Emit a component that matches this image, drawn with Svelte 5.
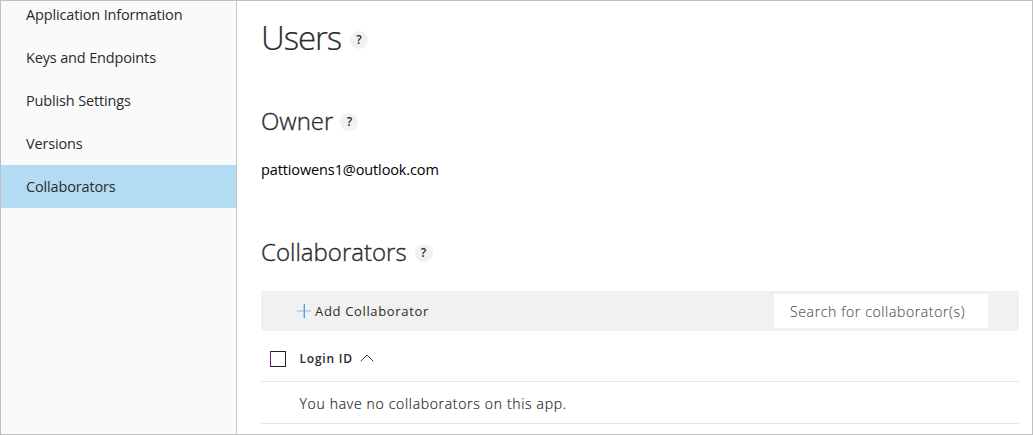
<script>
  const links = ['Application Information', 'Keys and Endpoints', 'Publish Settings', 'Versions', 'Collaborators'];
  let active = $state('Collaborators');
</script>

<div class="page">
  <nav>
    {#each links as link}
      <button class="link" class:active={link === active} onclick={() => (active = link)}><span>{link}</span></button>
    {/each}
  </nav>
  <main>
    <header class="title"><h1><span>Users</span></h1><i class="help">?</i></header>
    <header class="owner"><h2><span>Owner</span></h2><i class="help">?</i></header>
    <p class="email"><span>pattiowens1@outlook.com</span></p>
    <header class="collab"><h2><span>Collaborators</span></h2><i class="help">?</i></header>
    <div class="toolbar">
      <button class="add">
        <svg width="14" height="14" viewBox="0 0 14 14" fill="none">
          <path d="M0 7H14" stroke="#b0c6e8" stroke-width="1.4" />
          <path d="M7.3 0V14" stroke="#4a9fe0" stroke-width="1.3" />
        </svg>
        <span>Add Collaborator</span>
      </button>
      <div class="search"><span>Search for collaborator(s)</span></div>
    </div>
    <div class="row head">
      <i class="box"></i>
      <b>Login ID</b>
      <svg width="14" height="8" viewBox="0 0 14 8" fill="none"><path d="M.6 7.4L7 1L13.4 7.4" stroke="#444" /></svg>
    </div>
    <div class="row empty"><span>You have no collaborators on this app.</span></div>
  </main>
</div>

<style>
  :global(body) { background: #fff; }
  .page {
    box-sizing: border-box;
    width: 1033px;
    height: 435px;
    display: flex;
    overflow: hidden;
    border: 1px solid #c0c0c0;
    color: #2b2b2b;
    font-family: "Open Sans", "Noto Sans", sans-serif;
  }
  button { border: 0; background: none; padding: 0; font: inherit; color: inherit; text-align: left; }
  nav {
    box-sizing: border-box;
    width: 236px;
    flex: none;
    background: #fafafa;
    border-right: 1px solid #c8c8c8;
  }
  .link {
    display: block;
    width: 100%;
    height: 43px;
    padding-left: 25px;
    font-size: 14.5px;
    line-height: 43px;
    letter-spacing: -0.15px;
  }
  .link:first-child { margin-top: -8px; }
  .active { background: #b3dbf2; }
  main { width: 758px; padding-left: 24px; display: flex; flex-direction: column; }
  header { display: flex; align-items: center; }
  h1, h2, p { margin: 0; font-weight: 300; }
  h1 { font-size: 33px; line-height: 42px; letter-spacing: -1.1px; padding-bottom: 4px; -webkit-text-stroke: .2px currentColor; }
  h2 { font-size: 24px; line-height: 30px; padding-bottom: 2px; -webkit-text-stroke: .35px currentColor; }
  .help {
    width: 18px;
    height: 18px;
    border-radius: 50%;
    background: #f1f1f1;
    font: 600 12px/18px "Open Sans", sans-serif;
    text-align: center;
  }
  .title { height: 46px; margin-top: 16px; gap: 9px; }
  .owner { height: 32px; margin-top: 43px; gap: 7px; }
  .email { color: #000; font-size: 14.5px; line-height: 20px; font-weight: 400; letter-spacing: -.12px; margin-top: 22px; }
  .collab { height: 32px; margin-top: 57px; gap: 8px; }
  .toolbar {
    height: 40px;
    margin-top: 22px;
    background: #f1f1f1;
    display: flex;
    align-items: center;
    justify-content: space-between;
    padding: 0 31px 0 36px;
  }
  .add { display: flex; align-items: center; gap: 4px; font-size: 13px; letter-spacing: .66px; }
  .search {
    box-sizing: border-box;
    width: 214px;
    height: 34px;
    padding-left: 16px;
    background: #fff;
    color: #555;
    font-size: 14px;
    line-height: 35px;
    font-weight: 300;
    letter-spacing: .63px;
    -webkit-text-stroke: .15px currentColor;
  }
  .row { box-sizing: border-box; display: flex; align-items: center; border-bottom: 1px solid #e5e5e5; }
  .head { height: 51px; padding: 4px 0 0 9px; }
  .box { box-sizing: border-box; width: 16px; height: 16px; margin-top: 2px; border: 1px solid #222; border-left-color: #702080; }
  .head b { margin-left: 13.5px; font-size: 12px; font-weight: 600; letter-spacing: .78px; }
  .head svg { margin-left: 7.5px; }
  .empty { height: 42px; padding-left: 38.5px; font-size: 14px; font-weight: 300; letter-spacing: .68px; padding-top: 2px; -webkit-text-stroke: .2px currentColor; }
</style>
